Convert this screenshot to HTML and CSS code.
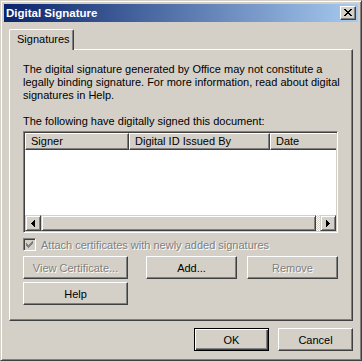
FILE: index.html
```html
<!DOCTYPE html>
<html>
<head>
<meta charset="utf-8">
<link rel="stylesheet" href="styles.css">
</head>
<body>
<div class="window">
  <div class="titlebar">
    <span class="title">Digital Signature</span>
    <div class="close"><svg width="8" height="7" viewBox="0 0 8 7" shape-rendering="crispEdges"><path d="M0 0h2v1h-2z M6 0h2v1h-2z M1 1h2v1h-2z M5 1h2v1h-2z M2 2h4v1h-4z M3 3h2v1h-2z M2 4h4v1h-4z M1 5h2v1h-2z M5 5h2v1h-2z M0 6h2v1h-2z M6 6h2v1h-2z" fill="#000"/></svg></div>
  </div>
  <div class="content">
    <div class="tabs"><div class="tab">Signatures</div></div>
    <div class="panel">
      <p class="info">The digital signature generated by Office may not constitute a<br>legally binding signature. For more information, read about digital<br>signatures in Help.</p>
      <p class="label">The following have digitally signed this document:</p>
      <div class="list">
        <div class="header">
          <div class="col c1">Signer</div>
          <div class="col c2">Digital ID Issued By</div>
          <div class="col c3">Date</div>
        </div>
        <div class="rows"></div>
        <div class="hscroll">
          <div class="sbtn"><svg width="4" height="7" viewBox="0 0 4 7" shape-rendering="crispEdges"><path d="M3 0h1v7h-1z M2 1h1v5h-1z M1 2h1v3h-1z M0 3h1v1h-1z" fill="#000"/></svg></div>
          <div class="thumb"></div>
          <div class="track"></div>
          <div class="sbtn"><svg width="4" height="7" viewBox="0 0 4 7" shape-rendering="crispEdges"><path d="M0 0h1v7h-1z M1 1h1v5h-1z M2 2h1v3h-1z M3 3h1v1h-1z" fill="#000"/></svg></div>
        </div>
      </div>
      <div class="check">
        <span class="box"><svg width="7" height="7" viewBox="0 0 7 7" shape-rendering="crispEdges"><path d="M6 0h1v1h-1z M5 1h2v1h-2z M0 2h1v1h-1z M4 2h3v1h-3z M0 3h2v1h-2z M3 3h3v1h-3z M0 4h5v1h-5z M1 5h3v1h-3z M2 6h1v1h-1z" fill="#808080"/></svg></span>
        <span class="disabled">Attach certificates with newly added signatures</span>
      </div>
      <div class="btnrow">
        <div class="btn wide disabled">View Certificate...</div>
        <div class="btn mid add">Add...</div>
        <div class="btn mid remove disabled">Remove</div>
      </div>
      <div class="btnrow second">
        <div class="btn wide">Help</div>
      </div>
    </div>
    <div class="footer">
      <div class="btn dlg default">OK</div>
      <div class="btn dlg">Cancel</div>
    </div>
  </div>
</div>
</body>
</html>
```
FILE: styles.css
```css
html, body {
  margin: 0;
  padding: 0;
  background: #d4d0c8;
}
body {
  font-family: "Liberation Sans", Arial, sans-serif;
  font-size: 11px;
  color: #000;
}
.window {
  width: 362px;
  height: 361px;
  box-sizing: border-box;
  border: 1px solid;
  border-color: #d4d0c8 #404040 #404040 #d4d0c8;
  box-shadow: inset 1px 1px #fff, inset -1px -1px #808080;
  padding: 3px;
  background: #d4d0c8;
  display: flex;
  flex-direction: column;
}
.titlebar {
  height: 18px;
  background: linear-gradient(to right, #0a246a, #a6caf0);
  display: flex;
  align-items: center;
  justify-content: space-between;
  padding-left: 2px;
}
.title {
  color: #fff;
  font-weight: bold;
  font-size: 11.5px;
  line-height: 14px;
}
.close {
  width: 16px;
  height: 14px;
  box-sizing: border-box;
  margin-right: 2px;
  background: #d4d0c8;
  border: 1px solid;
  border-color: #fff #404040 #404040 #fff;
  box-shadow: inset -1px -1px #808080;
  display: flex;
  align-items: center;
  justify-content: center;
  padding-bottom: 1px;
}
.close svg { display: block; }
.content {
  flex: 1;
  padding: 7px 5px 0 5px;
  display: flex;
  flex-direction: column;
}
.tabs {
  display: flex;
  height: 20px;
}
.tab {
  position: relative;
  z-index: 1;
  width: 65px;
  height: 21px;
  box-sizing: border-box;
  background: #d4d0c8;
  border-left: 1px solid #fff;
  border-top: 1px solid #fff;
  border-right: 1px solid #404040;
  border-radius: 2px 2px 0 0;
  box-shadow: inset -1px 0 #808080;
  padding: 1px 0 0 7px;
  line-height: 17px;
}
.panel {
  height: 272px;
  box-sizing: border-box;
  border: 1px solid;
  border-color: #fff #404040 #404040 #fff;
  box-shadow: inset -1px -1px #808080;
  padding: 13px 14px 0 13px;
  display: flex;
  flex-direction: column;
}
.info, .label {
  margin: 0;
  line-height: 13px;
  white-space: nowrap;
}
.label {
  margin-top: 13px;
}
.list {
  margin-top: 3px;
  height: 102px;
  box-sizing: border-box;
  border: 1px solid;
  border-color: #808080 #fff #fff #808080;
  box-shadow: inset 1px 1px #404040, inset -1px -1px #d4d0c8;
  padding: 1px;
  display: flex;
  flex-direction: column;
  background: #fff;
  overflow: hidden;
}
.header {
  display: flex;
  height: 17px;
  flex: none;
  overflow: hidden;
}
.col {
  flex: none;
  box-sizing: border-box;
  background: #d4d0c8;
  border: 1px solid;
  border-color: #fff #404040 #404040 #fff;
  box-shadow: inset -1px -1px #808080;
  padding-left: 5px;
  line-height: 14px;
  white-space: nowrap;
}
.c1 { width: 104px; }
.c2 { width: 141px; }
.c3 { width: 120px; }
.rows {
  flex: 1;
  background: #fff;
}
.hscroll {
  height: 16px;
  flex: none;
  display: flex;
}
.sbtn, .thumb {
  box-sizing: border-box;
  background: #d4d0c8;
  border: 1px solid;
  border-color: #d4d0c8 #404040 #404040 #d4d0c8;
  box-shadow: inset 1px 1px #fff, inset -1px -1px #808080;
}
.sbtn {
  width: 16px;
  flex: none;
  display: flex;
  align-items: center;
  justify-content: center;
}
.sbtn svg { display: block; }
.thumb {
  width: 275px;
  flex: none;
}
.track {
  flex: 1;
  background-color: #fff;
  background-image: repeating-conic-gradient(#d4d0c8 0 25%, #fff 0 50%);
  background-size: 2px 2px;
}
.check {
  margin-top: 5px;
  height: 13px;
  display: flex;
  align-items: center;
}
.box {
  width: 13px;
  height: 13px;
  box-sizing: border-box;
  border: 1px solid;
  border-color: #808080 #fff #fff #808080;
  box-shadow: inset 1px 1px #404040, inset -1px -1px #d4d0c8;
  background: #d4d0c8;
  display: flex;
  align-items: center;
  justify-content: center;
  margin-right: 5px;
  flex: none;
}
.box svg { display: block; }
.disabled {
  color: #808080;
  text-shadow: 1px 1px 0 #fff;
}
.btnrow {
  display: flex;
  margin-top: 5px;
}
.btnrow.second {
  margin-top: 3px;
}
.btn {
  height: 23px;
  box-sizing: border-box;
  background: #d4d0c8;
  border: 1px solid;
  border-color: #fff #404040 #404040 #fff;
  box-shadow: inset -1px -1px #808080;
  display: flex;
  align-items: center;
  justify-content: center;
  white-space: nowrap;
  flex: none;
}
.wide { width: 105px; }
.mid { width: 91px; }
.add { margin-left: 18px; }
.remove { margin-left: 10px; }
.footer {
  display: flex;
  justify-content: flex-end;
  gap: 9px;
  margin-top: 7px;
}
.dlg { width: 75px; }
.btn.default {
  border-color: #000;
  box-shadow: inset 1px 1px #fff, inset -1px -1px #404040, inset -2px -2px #808080;
}
```
